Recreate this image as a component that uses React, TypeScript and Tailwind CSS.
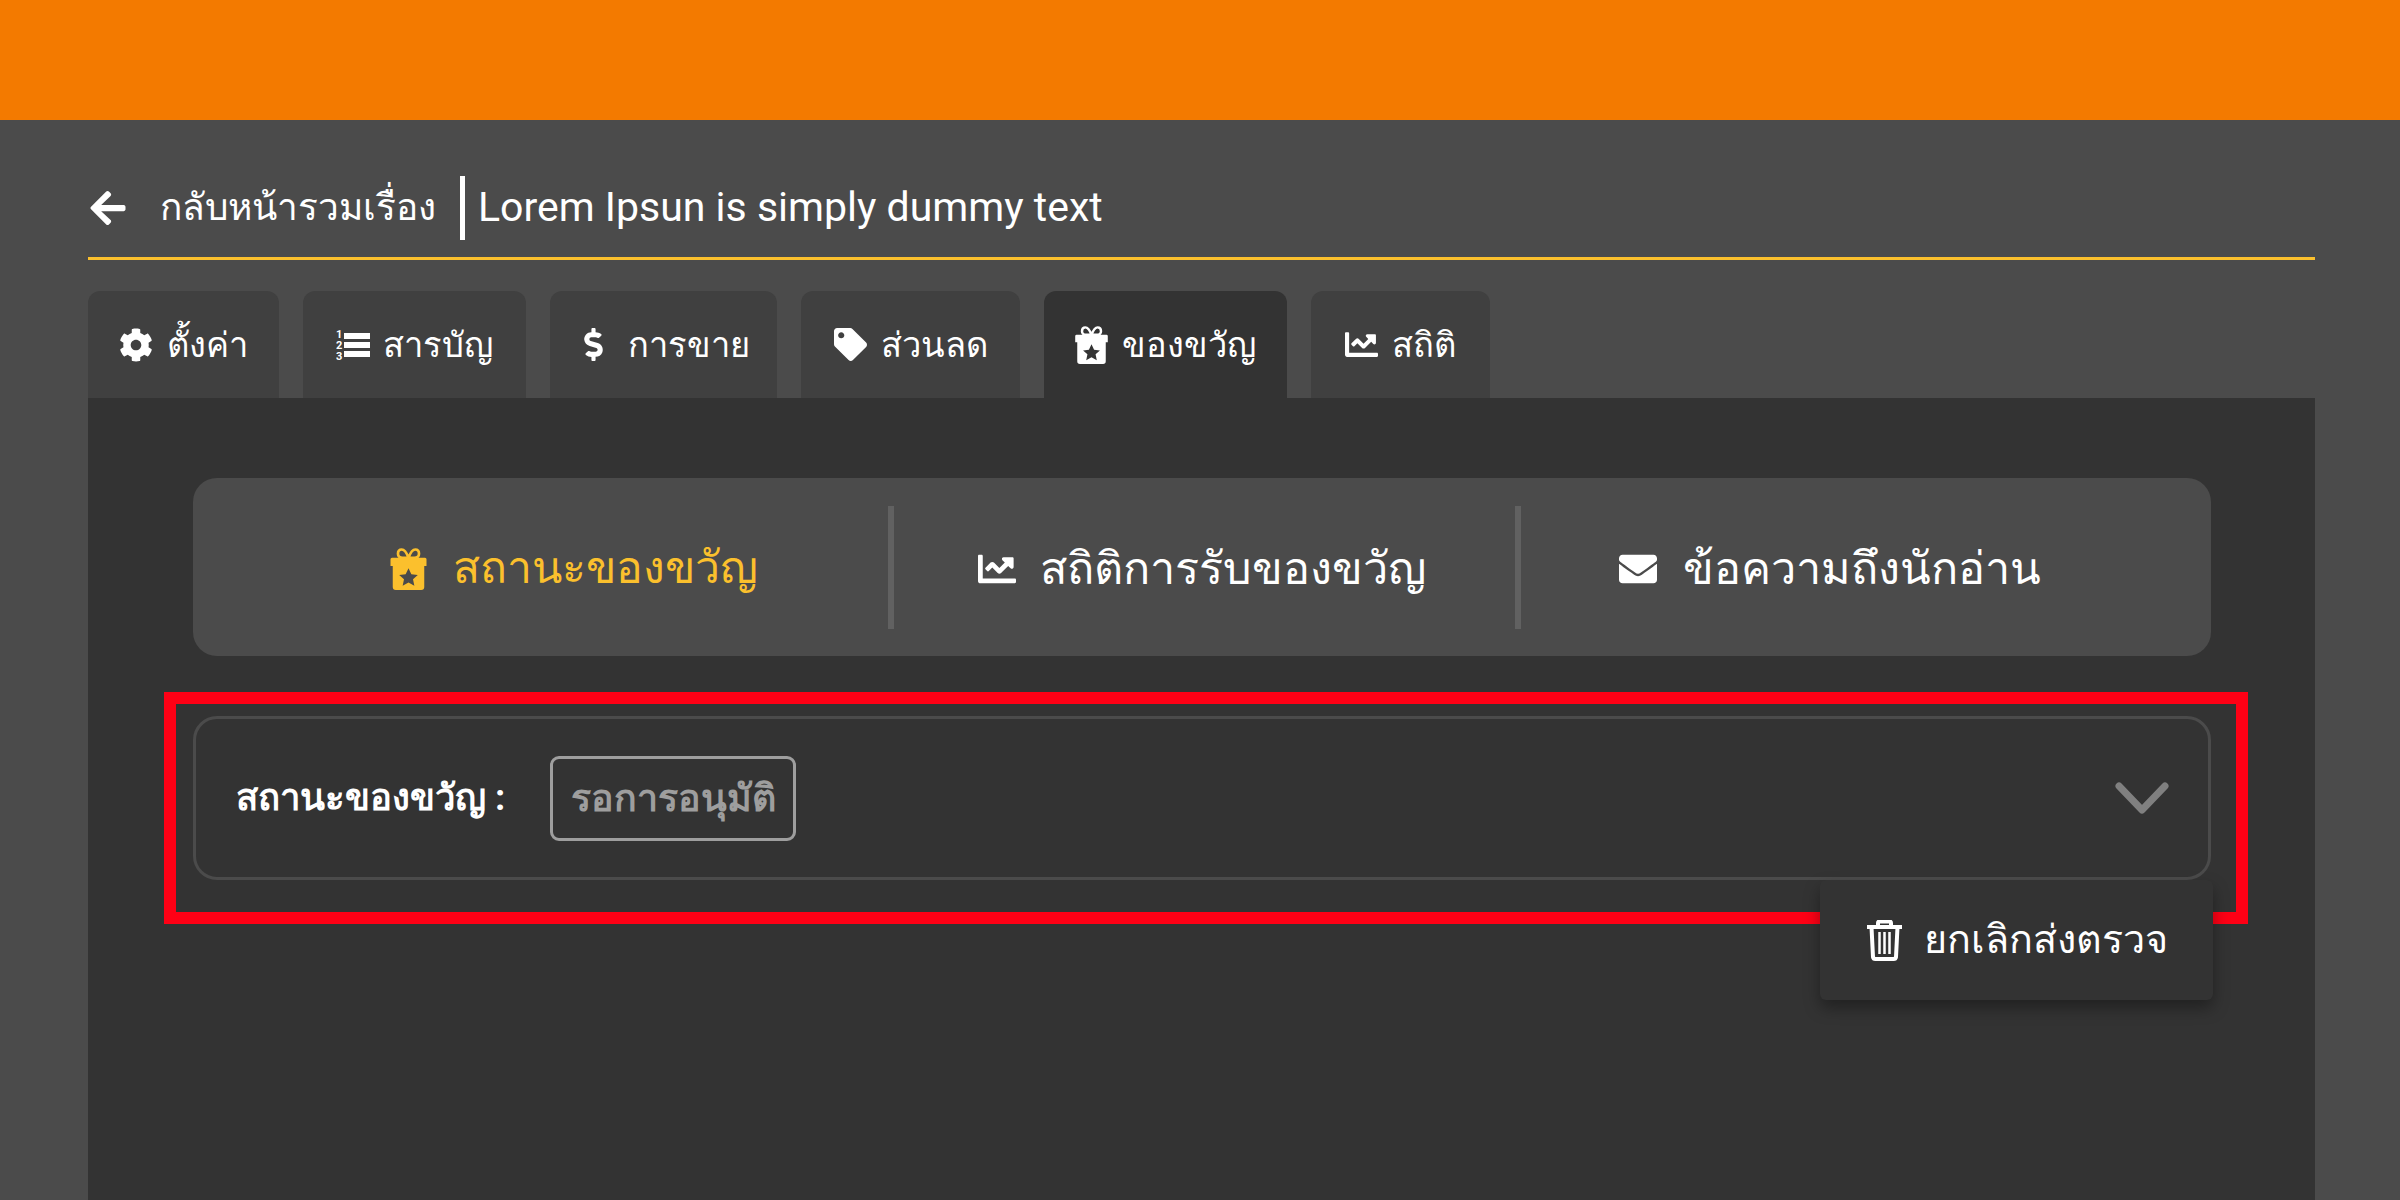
import { FaArrowLeft, FaCog, FaDollarSign, FaTag, FaChartLine, FaEnvelope } from "react-icons/fa";

function GiftStar({ className }: { className?: string }) {
  return (
    <svg viewBox="0 0 24 28" className={className} fill="currentColor">
      <path fillRule="evenodd" d="M0 7.500a1 1 0 0 1 1-1h22a1 1 0 0 1 1 1V12h-1.500v14a2 2 0 0 1-2 2h-17a2 2 0 0 1-2-2V12H0zM12 13.500l1.900 4 4.300.5-3.200 2.900.9 4.300-3.900-2.200-3.900 2.200.9-4.300-3.200-2.900 4.300-.5z" />
      <path fill="none" stroke="currentColor" strokeWidth="1.800" d="M12 6.500C10.500 2.500 9 1 7.500 1 5.500 1 5 2.500 5 3.800 5 5.500 6 6.500 8 6.500zM12 6.500c1.500-4 3-5.500 4.500-5.500C18.500 1 19 2.500 19 3.800c0 1.700-1 2.700-3 2.700z" />
    </svg>
  );
}

function Trash({ className }: { className?: string }) {
  return (
    <svg viewBox="0 0 35 41" className={className} fill="none" stroke="currentColor" strokeWidth="4">
      <path d="M0 7h35M11 7V3a1.500 1.500 0 0 1 1.500-1.500h10A1.500 1.500 0 0 1 24 3v4" />
      <path d="M4.500 7l1.500 30a2.500 2.500 0 0 0 2.500 2h18a2.500 2.500 0 0 0 2.500-2L30.500 7" />
      <path d="M12.500 12v22M17.500 12v22M22.500 12v22" strokeWidth="2.500" />
    </svg>
  );
}

function ListNumbers({ className }: { className?: string }) {
  return (
    <svg viewBox="0 0 34 33" className={className} fill="currentColor">
      <rect x="8" y="5" width="26" height="6" />
      <rect x="8" y="14" width="26" height="6" />
      <rect x="8" y="23" width="26" height="6" />
      <text x="0" y="10" fontSize="11" fontWeight="700" fontFamily="Roboto, sans-serif">1</text>
      <text x="0" y="21" fontSize="11" fontWeight="700" fontFamily="Roboto, sans-serif">2</text>
      <text x="0" y="32" fontSize="11" fontWeight="700" fontFamily="Roboto, sans-serif">3</text>
    </svg>
  );
}

const tabs = [
  { label: "ตั้งค่า", icon: <FaCog className="text-[34px]" />, width: "w-[191px]", gap: "gap-[14px]" },
  { label: "สารบัญ", icon: <ListNumbers className="w-[34px] h-[33px]" />, width: "w-[223px]", gap: "gap-[13px]" },
  { label: "การขาย", icon: <FaDollarSign className="text-[33px]" />, width: "w-[227px]", gap: "gap-[18px]" },
  { label: "ส่วนลด", icon: <FaTag className="text-[33px]" />, width: "w-[219px]", gap: "gap-[14px]" },
  { label: "ของขวัญ", icon: <GiftStar className="w-[33px] h-[38px]" />, width: "w-[243px]", gap: "gap-[14px]", active: true },
  { label: "สถิติ", icon: <FaChartLine className="text-[33px]" />, width: "w-[179px]", gap: "gap-[14px]" },
];

export default function App() {
  return (
    <div className="h-screen overflow-hidden bg-[#4b4b4b] text-white font-['Roboto',sans-serif]">
      <div className="h-[120px] bg-[#f37a00]" />
      <div className="pl-[88px] pr-[85px]">
        <div className="flex items-center h-[64px] mt-[56px]">
          <FaArrowLeft className="text-[40px] w-[40px]" />
          <span className="ml-[32px] text-[37px]">กลับหน้ารวมเรื่อง</span>
          <div className="ml-[24px] w-[5px] h-[64px] bg-white" />
          <span className="ml-[13px] text-[41px]">Lorem Ipsun is simply dummy text</span>
        </div>
        <div className="h-[3px] mt-[17px] bg-[#fbc02d]" />
        <div className="flex gap-[24px] mt-[31px]">
          {tabs.map((t) => (
            <div
              key={t.label}
              className={`${t.width} ${t.gap} h-[107px] flex items-center justify-center rounded-t-[12px] text-[34.500px] leading-[70px] ${t.active ? "bg-[#333333]" : "bg-[#404040]"}`}
            >
              {t.icon}
              <span>{t.label}</span>
            </div>
          ))}
        </div>
        <div className="bg-[#333333] h-[802px] pt-[80px] pl-[105px] pr-[104px]">
          <div className="flex items-center h-[178px] rounded-[24px] bg-[#4b4b4b] text-[45px]">
            <div className="w-[695px] flex items-center gap-[26px] pl-[197px] pt-[3px] text-[44.500px] text-[#fbc02d]">
              <GiftStar className="w-[37px] h-[42px]" />
              <span>สถานะของขวัญ</span>
            </div>
            <div className="w-[6px] h-[123px] bg-[#616161]" />
            <div className="w-[621px] flex items-center gap-[24px] pl-[84px] pt-[3px]">
              <FaChartLine className="text-[38px]" />
              <span>สถิติการรับของขวัญ</span>
            </div>
            <div className="w-[6px] h-[123px] bg-[#616161]" />
            <div className="flex-1 flex items-center gap-[26px] pl-[98px] pt-[3px]">
              <FaEnvelope className="text-[38px]" />
              <span>ข้อความถึงนักอ่าน</span>
            </div>
          </div>

          <div className="relative -ml-[29px] -mr-[37px] mt-[36px] border-[12px] border-[#ff0015] pt-[12px] pl-[17px] pr-[25px] pb-[32px]">
            <div className="flex items-center h-[164px] rounded-[24px] border-[3px] border-[#4b4b4b] pl-[40px] pr-[39px]">
              <span className="text-[36.500px] font-bold">สถานะของขวัญ :</span>
              <span className="ml-[45px] flex items-center justify-center w-[246px] h-[85px] rounded-[9px] border-[3px] border-[#9e9e9e] text-[37.500px] font-bold text-[#9e9e9e]">
                รอการอนุมัติ
              </span>
              <svg viewBox="0 0 54 32" className="ml-auto w-[54px] h-[32px] text-[#808080]" fill="none" stroke="currentColor" strokeWidth="7" strokeLinecap="round" strokeLinejoin="round">
                <path d="M4 4l23 24L50 4" />
              </svg>
            </div>
            <div className="absolute left-[1644px] top-[176px] flex items-center w-[393px] h-[120px] gap-[22px] pl-[47px] rounded-[6px] bg-[#333333] shadow-[0_8px_16px_rgba(0,0,0,0.35)] text-[39.500px]">
              <Trash className="w-[35px] h-[41px]" />
              <span>ยกเลิกส่งตรวจ</span>
            </div>
          </div>
        </div>
      </div>
    </div>
  );
}
